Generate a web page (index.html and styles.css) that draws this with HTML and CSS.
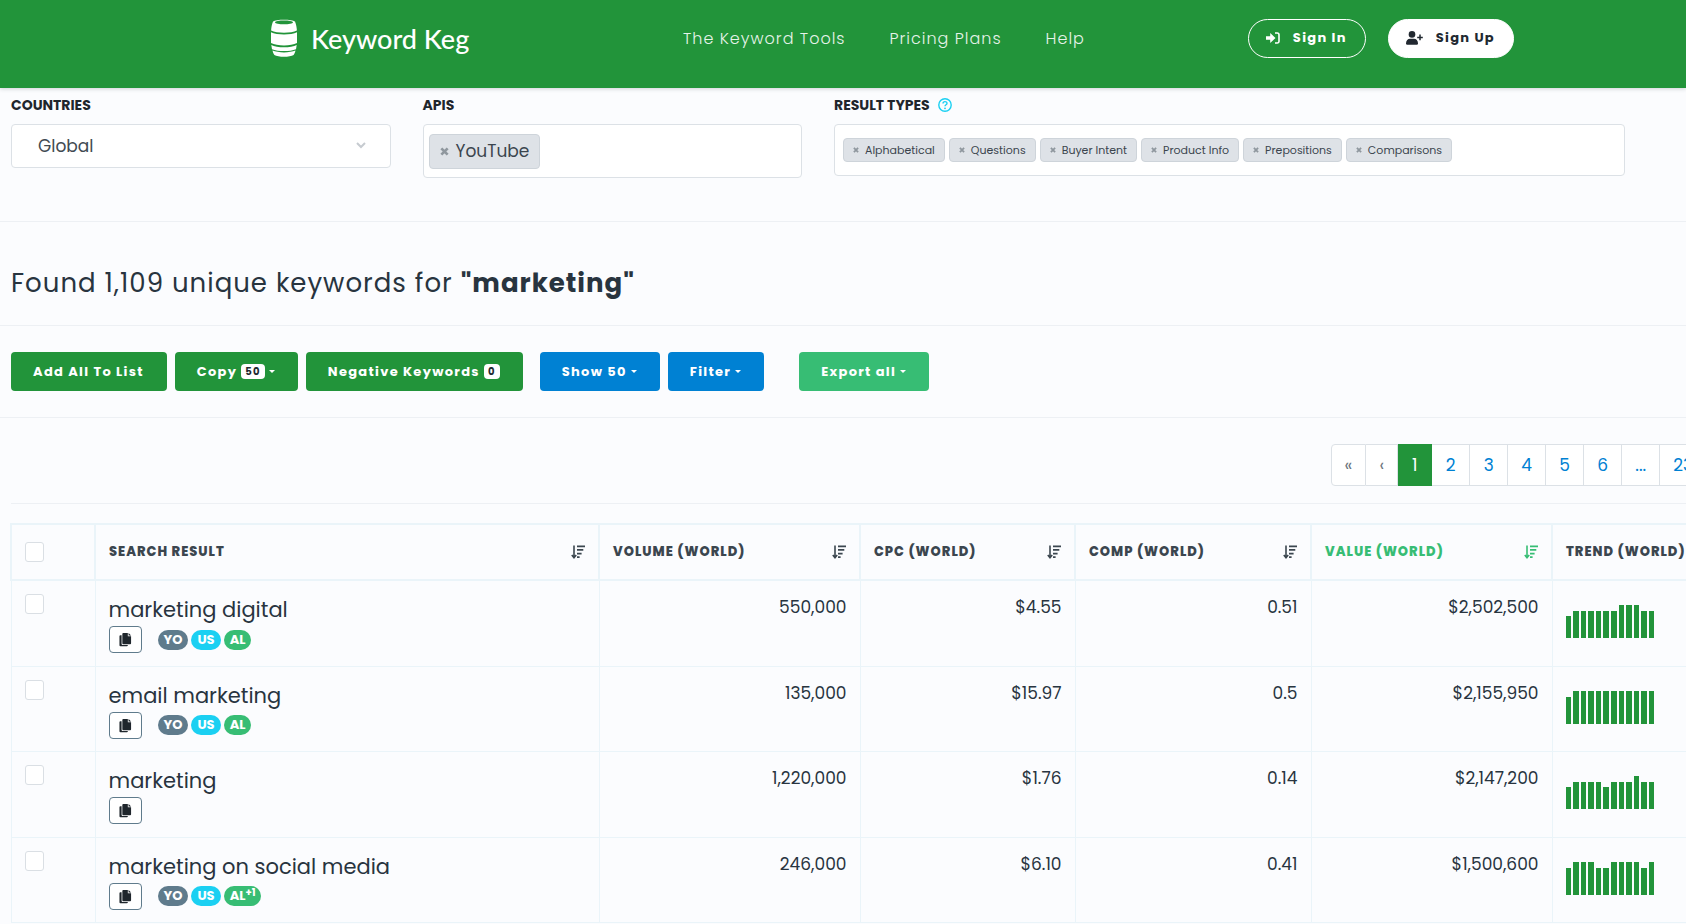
FILE: index.html
```html
<!DOCTYPE html>
<html lang="en">
<head>
<meta charset="utf-8">
<title>Keyword Keg</title>
<link rel="stylesheet" href="styles.css">
</head>
<body>
<svg class="sprite" aria-hidden="true">
  <symbol id="sort" viewBox="0 0 14 14"><path d="M3 .5v12M.8 10 3 12.7 5.2 10" fill="none" stroke="currentColor" stroke-width="1.6"/><path d="M6 .6h8v1.7H6zM6 4.1h6.3v1.7H6zM6 7.7h4.6v1.7H6zM6 11.3h2.6V13H6z" fill="currentColor"/></symbol>
  <symbol id="copy" viewBox="0 0 14 16"><path d="M4.6 1h4.900v3.500H13V12a1 1 0 0 1-1 1H4.600a1 1 0 0 1-1-1V2a1 1 0 0 1 1-1z" fill="currentColor"/><path d="M10.300.9 13.100 3.700H10.300z" fill="currentColor"/><path d="M2.800 3.500V12.800a1 1 0 0 0 1 1H9.500V14.300a1 1 0 0 1-1 1H1.500a1 1 0 0 1-1-1V4.500a1 1 0 0 1 1-1z" fill="currentColor"/></symbol>
  <symbol id="cross" viewBox="0 0 10 10"><path d="M1.500 1.500 8.500 8.500M8.500 1.500 1.500 8.500" stroke="currentColor" stroke-width="3" fill="none"/></symbol>
</svg>

<header class="topbar">
  <a class="brand" href="#">
    <svg class="brand-mark" viewBox="0 0 26 38" aria-hidden="true">
      <path fill="#fff" fill-rule="evenodd" d="M2 2.500C5 0 21 0 24 2.500 25.200 5.500 25.700 8.500 25.900 11.500 20 14.500 6 14.500.1 11.500.3 8.500.8 5.500 2 2.500zM4 3.300C4 6 22 6 22 3.300 22 .8 4 .8 4 3.300z"/>
      <path fill="#fff" d="M0 13.200C6 16.200 20 16.200 26 13.200V24C20 27.300 6 27.300 0 24z"/>
      <path fill="#fff" d="M.3 25.900C6 29 20 29 25.700 25.900L25 30.200C19 32.700 7 32.700 1 30.200z"/>
      <path fill="#fff" d="M1.500 31.600C7 34 19 34 24.500 31.600 24.100 33.500 23.500 35 22.600 36 19 38.400 7 38.400 3.400 36 2.500 35 1.900 33.500 1.500 31.600z"/>
    </svg>
    <span>Keyword Keg</span>
  </a>
  <nav class="nav">
    <a href="#">The Keyword Tools</a>
    <a href="#">Pricing Plans</a>
    <a href="#">Help</a>
  </nav>
  <div class="account">
    <a class="pill pill-outline" href="#">
      <svg width="14" height="12" viewBox="0 0 14 12" aria-hidden="true"><path d="M0 4.200h4.200V1l5.300 5-5.300 5V7.800H0z" fill="currentColor"/><path d="M9 1h2.200A1.800 1.800 0 0 1 13 2.800v6.400A1.800 1.800 0 0 1 11.200 11H9" fill="none" stroke="currentColor" stroke-width="1.600"/></svg>
      Sign In
    </a>
    <a class="pill pill-solid" href="#">
      <svg width="17" height="14" viewBox="0 0 17 14" aria-hidden="true"><circle cx="6" cy="3.400" r="3.300" fill="currentColor"/><path d="M0 12.500C0 9.500 1.800 7.800 4 7.800h4c2.200 0 4 1.700 4 4.700 0 .8-.4 1.200-1.200 1.200H1.200C.4 13.700 0 13.300 0 12.500z" fill="currentColor"/><path d="M14 3.600v5.600M11.200 6.400h5.600" stroke="currentColor" stroke-width="1.500"/></svg>
      Sign Up
    </a>
  </div>
</header>

<main class="page">
  <section class="filters">
    <div class="field">
      <label class="field-label" for="country">Countries</label>
      <div class="select-wrap">
        <select id="country"><option>Global</option></select>
        <svg class="chevron" width="10" height="7" viewBox="0 0 10 7" aria-hidden="true"><path d="M1 1l4 4 4-4" fill="none" stroke="#c6cbd0" stroke-width="2"/></svg>
      </div>
    </div>
    <div class="field">
      <span class="field-label">APIs</span>
      <div class="tagbox">
        <span class="tag tag-large"><button type="button" aria-label="Remove YouTube"><svg><use href="#cross"/></svg></button>YouTube</span>
      </div>
    </div>
    <div class="field field-wide">
      <span class="field-label">Result types
        <svg class="help" width="14" height="14" viewBox="0 0 14 14" aria-hidden="true"><circle cx="7" cy="7" r="6.200" fill="none" stroke="#1bd0f2" stroke-width="1.400"/><path d="M5 5.600C5 3 9 3 9 5.400 9 6.800 7 6.800 7 8.300" fill="none" stroke="#1bd0f2" stroke-width="1.400"/><circle cx="7" cy="10.300" r=".9" fill="#1bd0f2"/></svg>
      </span>
      <div class="tagbox tagbox-small">
        <span class="tag"><button type="button" aria-label="Remove Alphabetical"><svg><use href="#cross"/></svg></button>Alphabetical</span>
        <span class="tag"><button type="button" aria-label="Remove Questions"><svg><use href="#cross"/></svg></button>Questions</span>
        <span class="tag"><button type="button" aria-label="Remove Buyer Intent"><svg><use href="#cross"/></svg></button>Buyer Intent</span>
        <span class="tag"><button type="button" aria-label="Remove Product Info"><svg><use href="#cross"/></svg></button>Product Info</span>
        <span class="tag"><button type="button" aria-label="Remove Prepositions"><svg><use href="#cross"/></svg></button>Prepositions</span>
        <span class="tag"><button type="button" aria-label="Remove Comparisons"><svg><use href="#cross"/></svg></button>Comparisons</span>
      </div>
    </div>
  </section>

  <section class="summary">
    <h1>Found 1,109 unique keywords for <strong>"marketing"</strong></h1>
  </section>

  <section class="toolbar">
    <div class="group">
      <button class="btn" type="button">Add All To List</button>
      <button class="btn" type="button">Copy <span class="count">50</span><i class="caret"></i></button>
      <button class="btn" type="button">Negative Keywords <span class="count">0</span></button>
    </div>
    <div class="group group-view">
      <button class="btn btn-blue" type="button">Show 50<i class="caret"></i></button>
      <button class="btn btn-blue" type="button">Filter<i class="caret"></i></button>
    </div>
    <button class="btn btn-mint" type="button">Export all<i class="caret"></i></button>
  </section>

  <div class="pager-row">
    <nav class="pager" aria-label="Pages">
      <a class="muted" href="#">«</a><a class="muted" href="#">‹</a><a class="current" href="#">1</a><a href="#">2</a><a href="#">3</a><a href="#">4</a><a href="#">5</a><a href="#">6</a><a href="#">...</a><a href="#">23</a>
    </nav>
  </div>

  <div class="results">
    <table>
      <colgroup><col class="c-check"><col><col class="c-volume"><col class="c-cpc"><col class="c-comp"><col class="c-value"><col class="c-trend"></colgroup>
      <thead>
        <tr>
          <th><input type="checkbox" aria-label="Select all"></th>
          <th><div class="head">Search result<svg><use href="#sort"/></svg></div></th>
          <th><div class="head">Volume (World)<svg><use href="#sort"/></svg></div></th>
          <th><div class="head">CPC (World)<svg><use href="#sort"/></svg></div></th>
          <th><div class="head">Comp (World)<svg><use href="#sort"/></svg></div></th>
          <th><div class="head sorted">Value (World)<svg><use href="#sort"/></svg></div></th>
          <th><div class="head">Trend (World)</div></th>
        </tr>
      </thead>
      <tbody>
        <tr>
          <td><input type="checkbox" aria-label="Select marketing digital"></td>
          <td><div class="keyword">marketing digital</div><div class="meta"><button class="copy" type="button" aria-label="Copy"><svg><use href="#copy"/></svg></button><span class="badge slate">YO</span><span class="badge cyan">US</span><span class="badge mint">AL</span></div></td>
          <td class="num">550,000</td><td class="num">$4.55</td><td class="num">0.51</td><td class="num">$2,502,500</td>
          <td><div class="trend"><i class="h2"></i><i class="h3"></i><i class="h3"></i><i class="h3"></i><i class="h3"></i><i class="h3"></i><i class="h3"></i><i class="h4"></i><i class="h4"></i><i class="h4"></i><i class="h3"></i><i class="h3"></i></div></td>
        </tr>
        <tr>
          <td><input type="checkbox" aria-label="Select email marketing"></td>
          <td><div class="keyword">email marketing</div><div class="meta"><button class="copy" type="button" aria-label="Copy"><svg><use href="#copy"/></svg></button><span class="badge slate">YO</span><span class="badge cyan">US</span><span class="badge mint">AL</span></div></td>
          <td class="num">135,000</td><td class="num">$15.97</td><td class="num">0.5</td><td class="num">$2,155,950</td>
          <td><div class="trend"><i class="h3"></i><i class="h4"></i><i class="h4"></i><i class="h4"></i><i class="h4"></i><i class="h4"></i><i class="h4"></i><i class="h4"></i><i class="h4"></i><i class="h4"></i><i class="h4"></i><i class="h4"></i></div></td>
        </tr>
        <tr>
          <td><input type="checkbox" aria-label="Select marketing"></td>
          <td><div class="keyword">marketing</div><div class="meta"><button class="copy" type="button" aria-label="Copy"><svg><use href="#copy"/></svg></button></div></td>
          <td class="num">1,220,000</td><td class="num">$1.76</td><td class="num">0.14</td><td class="num">$2,147,200</td>
          <td><div class="trend"><i class="h2"></i><i class="h3"></i><i class="h3"></i><i class="h3"></i><i class="h3"></i><i class="h2"></i><i class="h3"></i><i class="h3"></i><i class="h3"></i><i class="h4"></i><i class="h3"></i><i class="h3"></i></div></td>
        </tr>
        <tr>
          <td><input type="checkbox" aria-label="Select marketing on social media"></td>
          <td><div class="keyword">marketing on social media</div><div class="meta"><button class="copy" type="button" aria-label="Copy"><svg><use href="#copy"/></svg></button><span class="badge slate">YO</span><span class="badge cyan">US</span><span class="badge mint">AL<sup>+1</sup></span></div></td>
          <td class="num">246,000</td><td class="num">$6.10</td><td class="num">0.41</td><td class="num">$1,500,600</td>
          <td><div class="trend"><i class="h3"></i><i class="h4"></i><i class="h4"></i><i class="h4"></i><i class="h3"></i><i class="h3"></i><i class="h4"></i><i class="h4"></i><i class="h4"></i><i class="h4"></i><i class="h3"></i><i class="h4"></i></div></td>
        </tr>
      </tbody>
    </table>
  </div>
</main>
</body>
</html>
```

FILE: styles.css
```css
:root {
  --green: #22943a;
  --mint: #37bd74;
  --blue: #0081d3;
  --ink: #28343f;
  --rule: #edf0f4;
  --cell: #eaf4f9;
}

* { box-sizing: border-box; }

body {
  margin: 0;
  background: #fbfcfe;
  color: var(--ink);
  font-family: Poppins, Inter, "Liberation Sans", sans-serif;
  font-size: 16px;
  overflow: hidden;
}

button, select, input { font: inherit; margin: 0; }
a { text-decoration: none; }
.sprite { display: none; }

/* Header */
.topbar {
  position: relative;
  display: flex;
  align-items: center;
  height: 88px;
  padding: 0 172px 16px 271px;
  background: var(--green);
  box-shadow: 0 1px 4px rgba(40, 50, 60, .2);
}

.brand {
  display: flex;
  align-items: center;
  gap: 14px;
  margin-right: auto;
  padding-top: 4px;
  color: #fff;
  font-family: Lato, sans-serif;
  font-size: 27px;
  font-weight: 500;
}
.brand-mark { width: 26px; height: 38px; }

.nav {
  display: flex;
  gap: 44px;
  margin-right: 163px;
  padding-top: 4px;
}
.nav a { color: #e6f3e9; font-size: 16px; font-weight: 300; letter-spacing: 1px; }

.account { display: flex; gap: 22px; padding-top: 4px; }
.pill {
  display: flex;
  align-items: center;
  gap: 13px;
  height: 39px;
  padding: 0 18px 0 17px;
  border: 1px solid #fff;
  border-radius: 20px;
  font-size: 13px;
  font-weight: 700;
  letter-spacing: .1em;
}
.pill-outline { color: #fff; }
.pill-solid { background: #fff; color: #212830; }

/* Filters */
.filters {
  display: grid;
  grid-template-columns: repeat(4, 1fr);
  gap: 32px;
  align-items: start;
  padding: 6px 61px 43px 11px;
  border-bottom: 1px solid var(--rule);
}
.field-wide { grid-column: span 2; }
.field-label {
  display: flex;
  align-items: center;
  gap: 8px;
  margin-bottom: 8px;
  color: #1f262c;
  font-size: 14px;
  font-weight: 700;
  line-height: 22px;
  text-transform: uppercase;
}
.select-wrap { position: relative; }
.select-wrap select {
  width: 100%;
  height: 44px;
  padding: 0 26px;
  border: 1px solid #dce1e6;
  border-radius: 4px;
  background: #fff;
  color: #414a52;
  font-size: 17px;
  appearance: none;
}
.chevron { position: absolute; right: 25px; top: 18px; }
.tagbox {
  display: flex;
  flex-wrap: wrap;
  align-items: center;
  gap: 4px;
  min-height: 54px;
  padding: 0 5px;
  border: 1px solid #dce1e6;
  border-radius: 4px;
  background: #fff;
}
.tagbox-small { min-height: 52px; padding: 0 8px; }
.tag {
  display: flex;
  align-items: center;
  gap: 6px;
  height: 24px;
  padding: 0 9px;
  border: 1px solid #ced4da;
  border-radius: 4px;
  background: #dee2e7;
  color: #3b454e;
  font-size: 11px;
}
.tag button {
  display: flex;
  padding: 0;
  border: 0;
  background: none;
  color: #8f979e;
}
.tag button svg { width: 6px; height: 6px; }
.tag-large { height: 35px; padding: 0 10px; font-size: 17px; gap: 7px; }
.tag-large button svg { width: 9px; height: 9px; }

/* Summary */
.summary { padding: 41px 11px 22px; border-bottom: 1px solid var(--rule); }
.summary h1 {
  margin: 0;
  font-size: 26px;
  font-weight: 400;
  line-height: 40px;
  letter-spacing: 1px;
}
.summary strong { font-weight: 700; }

/* Toolbar */
.toolbar {
  display: flex;
  gap: 35px;
  padding: 26px 11px;
  border-bottom: 1px solid var(--rule);
}
.group { display: flex; gap: 8px; }
.group-view { margin-left: -18px; }
.btn {
  display: flex;
  align-items: center;
  gap: 4px;
  height: 39px;
  padding: 0 23px 0 22px;
  border: 0;
  border-radius: 4px;
  background: var(--green);
  color: #fff;
  font-size: 13px;
  font-weight: 700;
  letter-spacing: .1em;
  white-space: nowrap;
}
.btn-blue { background: var(--blue); }
.btn-mint { background: var(--mint); }
.count {
  padding: 0 4px;
  border-radius: 4px;
  background: #fff;
  color: #212830;
  font-size: 10px;
  line-height: 15px;
}
.caret {
  border-top: 3px solid currentColor;
  border-left: 3px solid transparent;
  border-right: 3px solid transparent;
}

/* Pagination */
.pager-row {
  margin-left: 11px;
  padding: 26px 0 17px;
  border-bottom: 1px solid var(--rule);
}
.pager {
  display: flex;
  justify-content: flex-end;
  margin-right: -21px;
}
.pager a {
  flex: none;
  min-width: 38px;
  height: 42px;
  padding: 0 13px;
  border: 1px solid #dce1e6;
  border-left-width: 0;
  background: #fff;
  color: var(--blue);
  font-size: 17px;
  line-height: 40px;
  text-align: center;
}
.pager a:first-child { border-left-width: 1px; border-radius: 4px 0 0 4px; }
.pager .muted { min-width: 0; color: #6c757d; }
.pager .current { min-width: 34px; background: var(--green); border-color: var(--green); color: #fff; }

/* Results */
.results { padding: 19px 0 0 10px; }
table {
  width: calc(100% + 43px);
  border-collapse: collapse;
  table-layout: fixed;
}
.c-check { width: 84px; }
.c-volume { width: 261px; }
.c-cpc { width: 215px; }
.c-comp { width: 236px; }
.c-value { width: 241px; }
.c-trend { width: 176px; }
th {
  height: 56px;
  padding: 0 13px;
  border: 2px solid var(--cell);
  text-align: left;
  vertical-align: middle;
}
.head {
  display: flex;
  align-items: center;
  justify-content: space-between;
  color: #3b464f;
  font-size: 13px;
  font-weight: 800;
  letter-spacing: 1px;
  text-transform: uppercase;
  white-space: nowrap;
}
.head svg { width: 14px; height: 14px; }
.head.sorted { color: var(--mint); }
td {
  height: 85px;
  padding: 13px 13px 0;
  border: 1px solid var(--cell);
  vertical-align: top;
}
tbody tr:nth-child(odd) td { height: 86px; }
input[type="checkbox"] {
  display: block;
  width: 19px;
  height: 20px;
  border: 1px solid #dadfe4;
  border-radius: 3px;
  background: #fff;
  appearance: none;
}
.num { font-size: 17px; line-height: 26px; text-align: right; }
.keyword { font-size: 21px; line-height: 32px; }
.meta { display: flex; align-items: center; gap: 3px; }
.copy {
  display: flex;
  align-items: center;
  justify-content: center;
  width: 33px;
  height: 27px;
  margin-right: 13px;
  padding: 0;
  border: 1px solid #5f7b8c;
  border-radius: 4px;
  background: #fff;
  color: #1f262c;
}
.copy svg { width: 13px; height: 15px; }
.badge {
  display: flex;
  height: 20px;
  padding: 0 6px;
  border-radius: 10px;
  color: #fff;
  font-size: 13px;
  font-weight: 700;
  line-height: 20px;
}
.badge sup { font-size: 10px; line-height: 14px; }
.slate { background: #5f7b8c; }
.cyan { background: #1bd0f2; }
.mint { background: var(--mint); }
.trend {
  display: flex;
  align-items: flex-end;
  gap: 2px;
  width: 89px;
  height: 44px;
}
.trend i { flex: 1; background: var(--green); }
.trend .h2 { height: 22px; }
.trend .h3 { height: 27px; }
.trend .h4 { height: 33px; }
```
